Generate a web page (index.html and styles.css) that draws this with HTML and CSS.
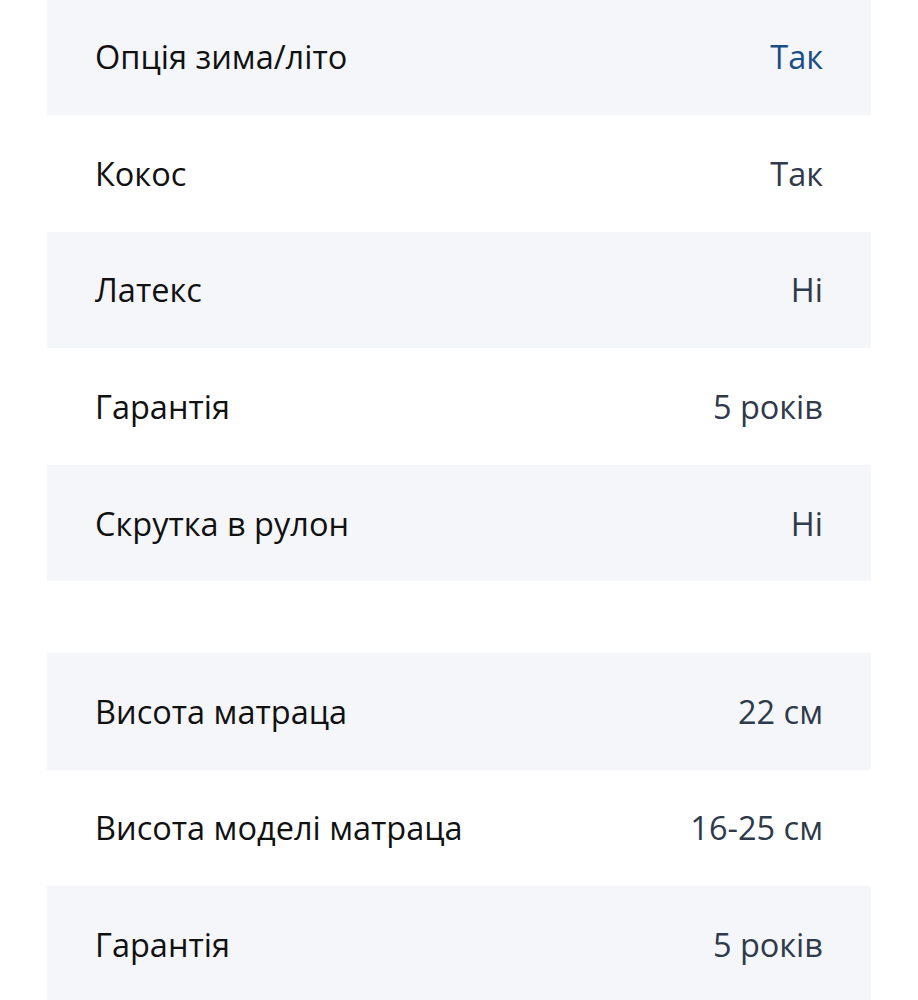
FILE: index.html
```html
<!DOCTYPE html>
<html lang="uk">
<head>
<meta charset="utf-8">
<link rel="stylesheet" href="styles.css">
</head>
<body>
<div class="page">
  <div class="group">
    <div class="row"><span class="label">Опція зима/літо</span><span class="value link">Так</span></div>
    <div class="row"><span class="label">Кокос</span><span class="value">Так</span></div>
    <div class="row"><span class="label">Латекс</span><span class="value">Ні</span></div>
    <div class="row"><span class="label">Гарантія</span><span class="value">5 років</span></div>
    <div class="row"><span class="label">Скрутка в рулон</span><span class="value">Ні</span></div>
  </div>
  <div class="group">
    <div class="row"><span class="label">Висота матраца</span><span class="value">22 см</span></div>
    <div class="row"><span class="label">Висота моделі матраца</span><span class="value">16-25 см</span></div>
    <div class="row"><span class="label">Гарантія</span><span class="value">5 років</span></div>
  </div>
</div>
</body>
</html>
```
FILE: styles.css
```css
html, body {
  margin: 0;
  padding: 0;
  background: #ffffff;
}
body {
  font-family: "Open Sans", "Noto Sans", sans-serif;
  font-size: 32.5px;
}
.page {
  margin-top: -1.6px;
  padding: 0 47px;
  display: flex;
  flex-direction: column;
  gap: 71.6px;
}
.group {
  display: flex;
  flex-direction: column;
}
.row {
  height: 116.6px;
  box-sizing: border-box;
  padding: 0 48px;
  display: flex;
  align-items: center;
  justify-content: space-between;
}
.row:nth-child(odd) {
  background: #f5f6fa;
}
.label {
  color: #111111;
}
.value {
  color: #2f3a4b;
}
.value.link {
  color: #1b4e86;
}
```
